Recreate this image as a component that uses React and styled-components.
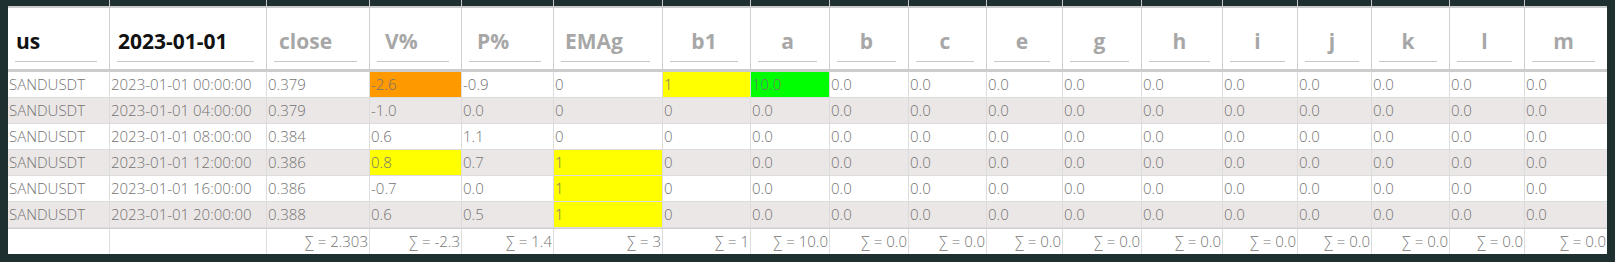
import styled, { createGlobalStyle } from 'styled-components'

const GlobalStyle = createGlobalStyle`
  html, body {
    margin: 0;
    padding: 0;
    background: #1e3130;
  }
`

const COLS = [
  { label: 'us', width: 101, pad: 1, filled: true },
  { label: '2023-01-01', width: 157, pad: 1, filled: true },
  { label: 'close', width: 103, pad: 5 },
  { label: 'V%', width: 92, pad: 8 },
  { label: 'P%', width: 92, pad: 8 },
  { label: 'EMAg', width: 109, pad: 4 },
  { label: 'b1', width: 88, center: true },
  { label: 'a', width: 79, center: true },
  { label: 'b', width: 79, center: true },
  { label: 'c', width: 78, center: true },
  { label: 'e', width: 76, center: true },
  { label: 'g', width: 79, center: true },
  { label: 'h', width: 81, center: true },
  { label: 'i', width: 75, center: true },
  { label: 'j', width: 74, center: true },
  { label: 'k', width: 78, center: true },
  { label: 'l', width: 75, center: true },
  { label: 'm', width: 83, center: true },
]

const zeros = Array(10).fill('0.0')

const ROWS = [
  { cells: ['SANDUSDT', '2023-01-01 00:00:00', '0.379', '-2.6', '-0.9', '0', '1', '10.0', ...zeros], marks: { 3: '#ff9900', 6: '#ffff00', 7: '#00ff00' } },
  { cells: ['SANDUSDT', '2023-01-01 04:00:00', '0.379', '-1.0', '0.0', '0', '0', '0.0', ...zeros], marks: {} },
  { cells: ['SANDUSDT', '2023-01-01 08:00:00', '0.384', '0.6', '1.1', '0', '0', '0.0', ...zeros], marks: {} },
  { cells: ['SANDUSDT', '2023-01-01 12:00:00', '0.386', '0.8', '0.7', '1', '0', '0.0', ...zeros], marks: { 3: '#ffff00', 5: '#ffff00' } },
  { cells: ['SANDUSDT', '2023-01-01 16:00:00', '0.386', '-0.7', '0.0', '1', '0', '0.0', ...zeros], marks: { 5: '#ffff00' } },
  { cells: ['SANDUSDT', '2023-01-01 20:00:00', '0.388', '0.6', '0.5', '1', '0', '0.0', ...zeros], marks: { 5: '#ffff00' } },
]

const SUMS = ['', '', '2.303', '-2.3', '1.4', '3', '1', '10.0', ...zeros]

const gridCols = COLS.map(c => c.width + 'px').join(' ')

const Frame = styled.div`
  padding: 0 8px 7px 8px;
  font-family: "Open Sans", "Noto Sans", sans-serif;
`

const Row = styled.div`
  display: grid;
  grid-template-columns: ${gridCols};
  background: ${props => props.$bg || '#ffffff'};
  border-bottom: 1px solid #dcdcdc;
`

const Strip = styled(Row)`
  height: 6px;
  background: #1e3130;
  border-bottom: 2px solid #cccccc;
`

const StripCell = styled.div`
  border-left: ${props => props.$first ? 'none' : '1px solid #c4c4c4'};
`

const HeadRow = styled(Row)`
  border-bottom: 3px solid #cccccc;
`

const HeadCell = styled.div`
  border-left: ${props => props.$first ? 'none' : '1px solid #cfcfcf'};
  padding: 12px 12px 7px 7px;
  height: 61px;
  box-sizing: border-box;
`

const HeadInput = styled.div`
  height: 42px;
  box-sizing: border-box;
  border-bottom: 1px solid #c8c8c8;
  display: flex;
  align-items: center;
  justify-content: ${props => props.$center ? 'center' : 'flex-start'};
  padding-left: ${props => props.$pad || 0}px;
  font-size: 21px;
  font-weight: 700;
  color: ${props => props.$filled ? '#111111' : '#a7a7a7'};
  white-space: nowrap;
`

const Cell = styled.div`
  border-left: ${props => props.$first ? 'none' : '1px solid #dcdcdc'};
  background: ${props => props.$mark || 'transparent'};
  height: 25px;
  line-height: 25px;
  padding-left: 1px;
  font-size: 15px;
  font-weight: 300;
  color: #737373;
  white-space: nowrap;
  overflow: hidden;
`

const FootRow = styled(Row)`
  border-top: 1px solid #cfcfcf;
  border-bottom: none;
`

const SumCell = styled(Cell)`
  height: 25px;
  text-align: right;
  padding: 0 1px 0 0;
`

export default function App() {
  return (
    <>
      <GlobalStyle />
      <Frame>
        <Strip>
          {COLS.map((c, i) => <StripCell key={i} $first={i === 0} />)}
        </Strip>
        <HeadRow>
          {COLS.map((c, i) => (
            <HeadCell key={i} $first={i === 0}>
              <HeadInput $center={c.center} $pad={c.pad} $filled={c.filled}>{c.label}</HeadInput>
            </HeadCell>
          ))}
        </HeadRow>
        {ROWS.map((r, ri) => (
          <Row key={ri} $bg={ri % 2 ? '#ebe7e6' : '#ffffff'}>
            {r.cells.map((v, ci) => (
              <Cell key={ci} $first={ci === 0} $mark={r.marks[ci]}>{v}</Cell>
            ))}
          </Row>
        ))}
        <FootRow>
          {SUMS.map((s, i) => (
            <SumCell key={i} $first={i === 0}>{s ? `∑ = ${s}` : ''}</SumCell>
          ))}
        </FootRow>
      </Frame>
    </>
  )
}
